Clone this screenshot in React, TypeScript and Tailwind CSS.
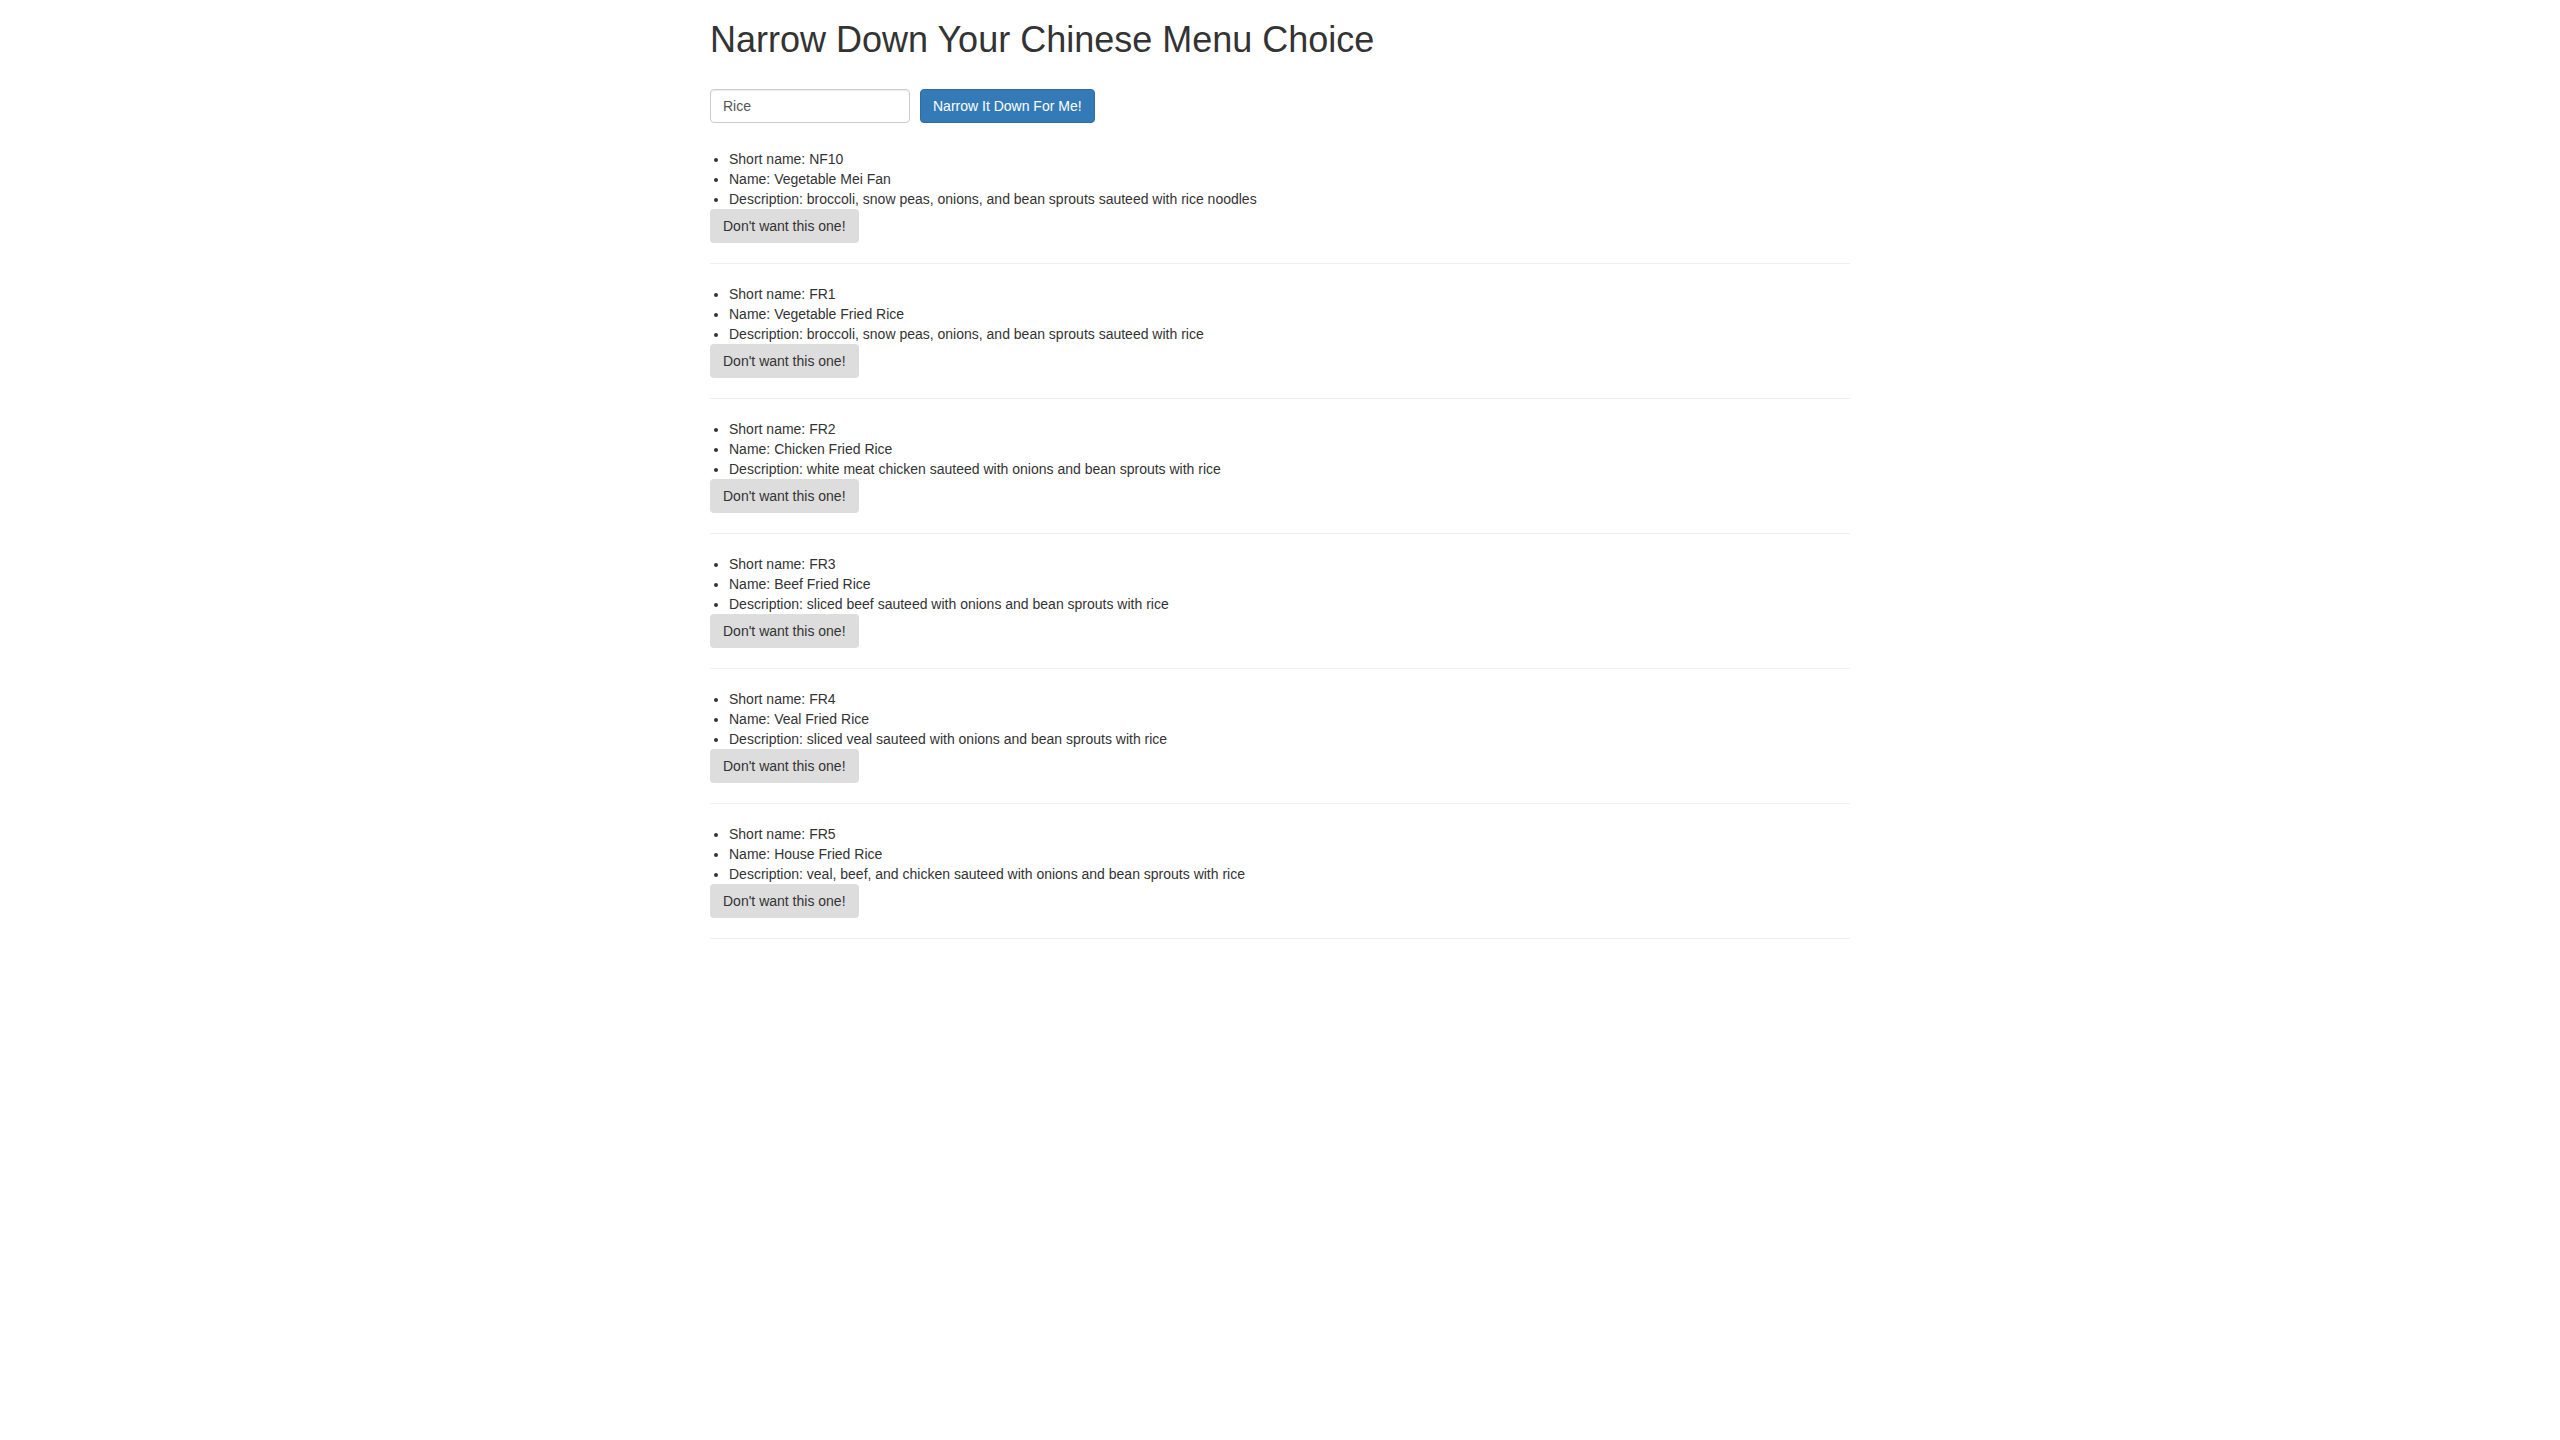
import React, { useState } from 'react';

interface MenuItem {
  short_name: string;
  name: string;
  description: string;
}

const foundItems: MenuItem[] = [
  { short_name: 'NF10', name: 'Vegetable Mei Fan', description: 'broccoli, snow peas, onions, and bean sprouts sauteed with rice noodles' },
  { short_name: 'FR1', name: 'Vegetable Fried Rice', description: 'broccoli, snow peas, onions, and bean sprouts sauteed with rice' },
  { short_name: 'FR2', name: 'Chicken Fried Rice', description: 'white meat chicken sauteed with onions and bean sprouts with rice' },
  { short_name: 'FR3', name: 'Beef Fried Rice', description: 'sliced beef sauteed with onions and bean sprouts with rice' },
  { short_name: 'FR4', name: 'Veal Fried Rice', description: 'sliced veal sauteed with onions and bean sprouts with rice' },
  { short_name: 'FR5', name: 'House Fried Rice', description: 'veal, beef, and chicken sauteed with onions and bean sprouts with rice' },
];

export default function App() {
  const [searchTerm, setSearchTerm] = useState('Rice');
  const [items, setItems] = useState(foundItems);

  const removeItem = (idx: number) => {
    setItems(items.filter((_, i) => i !== idx));
  };

  return (
    <div className="min-h-screen bg-white text-[14px] leading-[20px] text-[#333333] font-['Liberation_Sans',Arial,sans-serif]">
      <div className="w-[1170px] mx-auto px-[15px]">
        <h1 className="mt-[20px] mb-0 text-[36px] leading-[39.6px] font-medium">Narrow Down Your Chinese Menu Choice</h1>

        {/* Search form */}
        <div className="mt-[29px] flex items-center gap-[10px]">
          <input
            type="text"
            value={searchTerm}
            onChange={e => setSearchTerm(e.target.value)}
            className="w-[200px] h-[34px] px-[12px] py-[6px] text-[14px] text-[#555555] bg-white border border-[#cccccc] rounded-[4px] shadow-[inset_0_1px_1px_rgba(0,0,0,0.075)] outline-none"
          />
          <button className="h-[34px] px-[12px] py-[6px] text-[14px] text-white bg-[#337ab7] border border-[#2e6da4] rounded-[4px]">
            Narrow It Down For Me!
          </button>
        </div>

        {/* Found items */}
        <div className="mt-[26px]">
          {items.map((item, idx) => (
            <div key={item.short_name}>
              <ul className="list-disc pl-[19px] m-0">
                <li>Short name: {item.short_name}</li>
                <li>Name: {item.name}</li>
                <li>Description: {item.description}</li>
              </ul>
              <button
                onClick={() => removeItem(idx)}
                className="h-[34px] px-[13px] py-[6px] text-[14px] text-[#333333] bg-[#dddddd] rounded-[4px]"
              >
                Don't want this one!
              </button>
              <hr className="mt-[20px] mb-[20px] border-0 border-t border-[#eeeeee]" />
            </div>
          ))}
        </div>
      </div>
    </div>
  );
}
